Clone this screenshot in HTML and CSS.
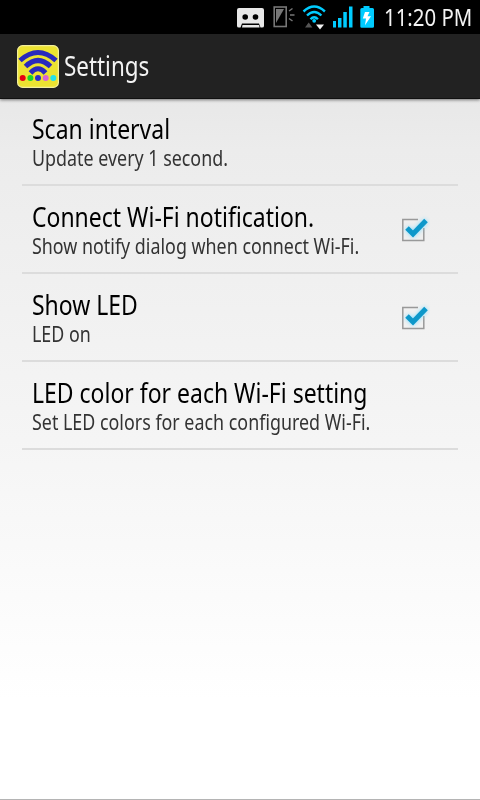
FILE: index.html
```html
<!DOCTYPE html>
<html lang="en">
<head>
    <meta charset="UTF-8">
    <meta name="viewport" content="width=device-width, initial-scale=1.0">
    <title>Settings</title>
    <link rel="stylesheet" href="styles.css">
</head>
<body>
    <div class="screen">
        <div class="status-bar">
            <svg class="status-icons" width="145" height="34" viewBox="0 0 145 34">
                <!-- voicemail tape -->
                <path fill="#e8e8e8" d="M9 8h23q2 0 2 2v16q0 1.500-2 1.500h-1.500l-1.500-4H12l-1.500 4H9q-2 0-2-1.500V10q0-2 2-2z"/>
                <path fill="#e8e8e8" d="M12.500 25h16.500l.6 2.500H12z"/>
                <circle cx="15.200" cy="17" r="2.800"/>
                <circle cx="25.500" cy="17" r="2.800"/>
                <!-- phone with light rays -->
                <rect x="44.200" y="7" width="12" height="19.500" fill="none" stroke="#777" stroke-width="1.600"/>
                <path fill="#777" d="M46 9h8l-8 14z"/>
                <path stroke="#777" stroke-width="1.500" d="M59 11l3.500-2.500M60 15h4.500M59 18.500l3.500 2.500"/>
                <!-- wifi -->
                <g fill="none" stroke="#0cf" stroke-width="2.400">
                    <path d="M73.500 11.500q10.700-10 21.400 0"/>
                    <path d="M77 15.500q7.200-7 14.400 0"/>
                    <path d="M80.500 19.200q3.700-4 7.400 0"/>
                </g>
                <circle cx="84.200" cy="20.800" r="1.900" fill="#0cf"/>
                <path fill="#555" d="M75 27.500l3.700-5 3.700 5z"/>
                <path fill="#f2f2f2" d="M86 24.500h8l-4 5z"/>
                <!-- signal -->
                <path fill="#0cf" d="M103 21h3v6.500h-3zM108 18h3.500v9.500H108zM113.300 12h3.500v15.500h-3.500zM119 6.500h3.500v21H119z"/>
                <!-- battery -->
                <path fill="#0cf" d="M133.500 6h6v2h3q1.500 0 1.500 1.500v17q0 1.300-1.500 1.300h-11q-1.200 0-1.200-1.300v-17q0-1.500 1.500-1.500h1.700z"/>
                <path fill="#fff" d="M135 12h4.500l-2 4.200h3.500l-6 9 1-6.700h-3.200z"/>
            </svg>
            <span class="clock">11:20 PM</span>
        </div>

        <div class="action-bar">
            <svg class="app-icon" width="42" height="43" viewBox="0 0 42 43">
                <rect x=".6" y=".6" width="40.800" height="41.800" rx="5" fill="#ece331" stroke="#f4ef9b" stroke-width="1.200"/>
                <g fill="none" stroke="#2929bd" stroke-width="5">
                    <path d="M3 15.500q18-16 36 0"/>
                    <path d="M8.500 21.500q12.500-12 25 0"/>
                    <path d="M13.500 28q7.500-8.500 15 0"/>
                </g>
                <circle cx="5.700" cy="33" r="3" fill="#e60012"/>
                <circle cx="13.400" cy="33" r="3" fill="#17d62b"/>
                <circle cx="21" cy="33" r="3" fill="#2c2cc8"/>
                <circle cx="28.700" cy="33" r="3" fill="#dc63d2"/>
                <circle cx="36.300" cy="33" r="3" fill="#25e1ea"/>
            </svg>
            <h1>Settings</h1>
        </div>

        <ul class="preferences">
            <li class="preference">
                <div class="labels">
                    <div class="title">Scan interval</div>
                    <div class="summary">Update every 1 second.</div>
                </div>
            </li>
            <li class="preference">
                <div class="labels">
                    <div class="title">Connect Wi-Fi notification.</div>
                    <div class="summary">Show notify dialog when connect Wi-Fi.</div>
                </div>
                <svg class="checkbox" width="32" height="32" viewBox="0 0 32 32">
                    <path class="box" d="M20 6.500H4.800v21h21V15"/>
                    <path class="tick" d="M9 15l6 6L28 7.500"/>
                </svg>
            </li>
            <li class="preference">
                <div class="labels">
                    <div class="title">Show LED</div>
                    <div class="summary">LED on</div>
                </div>
                <svg class="checkbox" width="32" height="32" viewBox="0 0 32 32">
                    <path class="box" d="M20 6.500H4.800v21h21V15"/>
                    <path class="tick" d="M9 15l6 6L28 7.500"/>
                </svg>
            </li>
            <li class="preference">
                <div class="labels">
                    <div class="title">LED color for each Wi-Fi setting</div>
                    <div class="summary">Set LED colors for each configured Wi-Fi.</div>
                </div>
            </li>
        </ul>
    </div>
</body>
</html>
```
FILE: styles.css
```css
* {
    margin: 0;
    padding: 0;
    box-sizing: border-box;
}

body {
    font-family: 'Noto Sans', 'Open Sans', sans-serif;
    color: #000;
    background: #fff;
}

.screen {
    width: 480px;
    height: 800px;
    overflow: hidden;
    background: linear-gradient(180deg, #e8e8e8 98px, #ececec 150px, #f5f5f5 440px, #fff 700px);
    border-bottom: 1px solid #b4b4b4;
}

.status-bar {
    display: flex;
    justify-content: flex-end;
    height: 34px;
    padding-right: 7px;
    background: #000;
    color: #f4f4f4;
}

.status-icons {
    flex: none;
    margin-right: 9px;
}

.clock {
    width: 89px;
    font-size: 24px;
    line-height: 34px;
    white-space: nowrap;
    transform: scaleX(0.85);
    transform-origin: left;
}

.action-bar {
    display: flex;
    align-items: center;
    height: 65px;
    padding: 0 17px;
    background: #222;
    border-bottom: 1px solid #111;
    box-shadow: 0 1px 3px rgba(0, 0, 0, 0.5);
    color: #f3f3f3;
}

.app-icon {
    flex: none;
    margin-right: 5px;
}

.action-bar h1 {
    font-size: 27px;
    font-weight: normal;
    line-height: 36px;
    transform: scaleX(0.83);
    transform-origin: left;
}

.preferences {
    margin: -1px 22px 0;
    list-style: none;
}

.preference {
    display: flex;
    align-items: center;
    justify-content: space-between;
    height: 88px;
    padding: 0 28px 0 10px;
    border-bottom: 2px solid #dcdcdc;
}

.labels {
    width: 366px;
    flex: none;
    white-space: nowrap;
}

.title,
.summary {
    transform: scaleX(0.851);
    transform-origin: left;
}

.title {
    font-size: 27px;
    line-height: 33px;
}

.summary {
    font-size: 21px;
    line-height: 26px;
    color: #333;
}

.checkbox {
    flex: none;
    margin-left: -2px;
}

.box {
    fill: none;
    stroke: #999;
    stroke-width: 1.5;
}

.tick {
    fill: none;
    stroke: #0d98ca;
    stroke-width: 5;
    filter: drop-shadow(0 0 2px #7fdcff);
}
```
